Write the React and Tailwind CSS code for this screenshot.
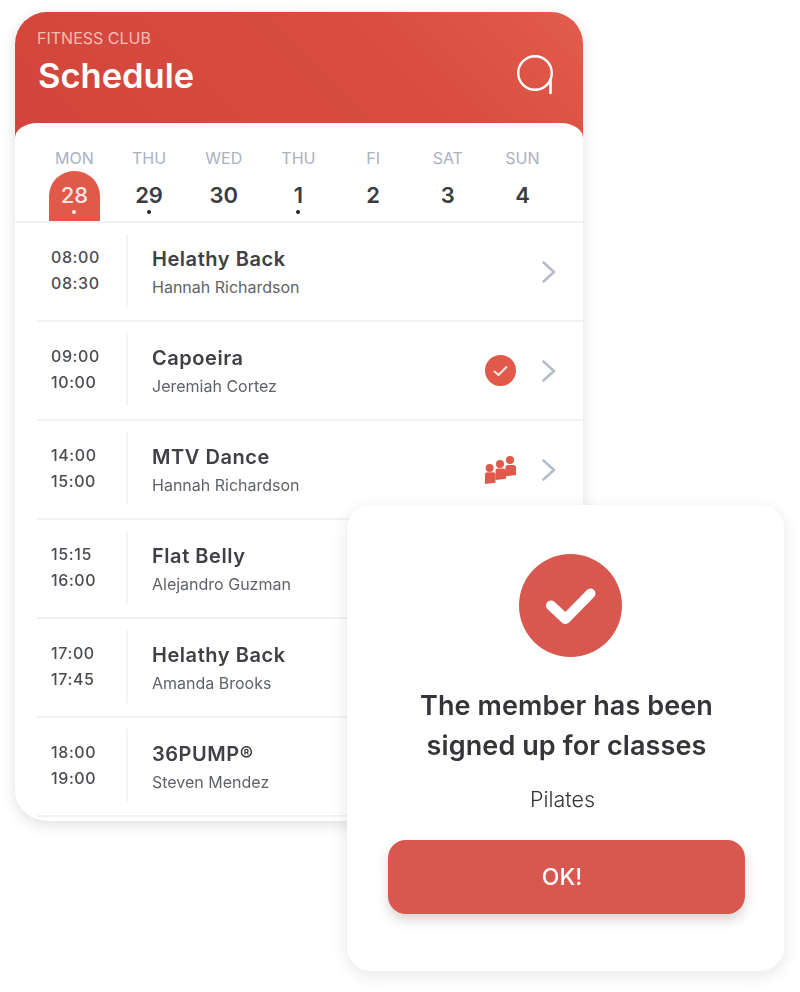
import React from "react";

const days = [
  { d: "MON", n: "28", active: true, dot: true },
  { d: "THU", n: "29", dot: true },
  { d: "WED", n: "30" },
  { d: "THU", n: "1", dot: true },
  { d: "FI", n: "2" },
  { d: "SAT", n: "3" },
  { d: "SUN", n: "4" },
];

const rows = [
  { a: "08:00", b: "08:30", t: "Helathy Back", p: "Hannah Richardson" },
  { a: "09:00", b: "10:00", t: "Capoeira", p: "Jeremiah Cortez", icon: "check" },
  { a: "14:00", b: "15:00", t: "MTV Dance", p: "Hannah Richardson", icon: "group" },
  { a: "15:15", b: "16:00", t: "Flat Belly", p: "Alejandro Guzman" },
  { a: "17:00", b: "17:45", t: "Helathy Back", p: "Amanda Brooks" },
  { a: "18:00", b: "19:00", t: "36PUMP®", p: "Steven Mendez" },
];

function Chevron() {
  return (
    <svg width="16" height="24" viewBox="0 0 16 24" fill="none" className="ml-[25px] mr-[26px] shrink-0">
      <path d="M2.5 2.5 L13 12 L2.5 21.5" stroke="#b4bdc9" strokeWidth="2.6" strokeLinecap="round" strokeLinejoin="round" />
    </svg>
  );
}

function Group() {
  return (
    <svg width="31" height="28" viewBox="0 0 31 28" fill="#e0594a" className="shrink-0">
      <circle cx="25" cy="4" r="4" />
      <path d="M20.5 11.5 q0-2.5 2.5-2.5 h5.5 q2.5 0 2.5 2.5 v7.5 l-10.5 1.2z" />
      <circle cx="15" cy="8" r="4" />
      <path d="M10.5 15 q0-2.5 2.5-2.5 h5.5 q2.5 0 2.5 2.5 v7.7 l-10.5 1.2z" />
      <circle cx="4.6" cy="12" r="4" />
      <path d="M0 19 q0-2.8 2.5-2.8 h5.5 q2.5 0 2.5 2.8 v7.7 l-10.5 1.3z" />
    </svg>
  );
}

function Check() {
  return (
    <div className="w-[31px] h-[31px] rounded-full bg-[#e0594a] flex items-center justify-center shrink-0">
      <svg width="15" height="12" viewBox="0 0 15 12" fill="none">
        <path d="M1.5 6.5 L5.5 10 L13.5 2" stroke="#fde8e4" strokeWidth="2" strokeLinecap="round" strokeLinejoin="round" />
      </svg>
    </div>
  );
}

function Row({ r }) {
  return (
    <div className="h-[99px] ml-[22px] border-b-2 border-[#f1f2f5] flex items-center">
      <div className="w-[91px] flex flex-col gap-[7px] pl-[14px] text-[16px] leading-[19px] font-medium text-[#4a4d52] tracking-[0.6px] h-[73px] justify-center border-r-2 border-[#f3f4f7] mb-[2px]">
        <div>{r.a}</div>
        <div>{r.b}</div>
      </div>
      <div className="flex-1 pl-[24px]">
        <div className="text-[20px] leading-[26px] font-semibold text-[#3e4045] tracking-[0.55px]">{r.t}</div>
        <div className="text-[16px] leading-[20px] mt-[5px] text-[#5f6368]">{r.p}</div>
      </div>
      {r.icon === "check" && <Check />}
      {r.icon === "group" && <Group />}
      <Chevron />
    </div>
  );
}

export default function App() {
  return (
    <div className="relative w-[800px] h-[992px] bg-white overflow-hidden font-['Inter',sans-serif]">
      <div className="ml-[15px] pt-[12px] w-[568px]">
        <div className="h-[809px] rounded-[32px] overflow-hidden bg-white shadow-[0_4px_14px_rgba(60,70,90,0.16)] blur-[0.7px]">
          <div className="h-[140px] bg-[linear-gradient(45deg,#d2443b,#d94e41_70%,#e35c4c)] px-[23px] pt-[17px] flex justify-between">
            <div>
              <div className="text-[16px] leading-[18px] text-[#f5bdb5] -ml-[1px]">FITNESS CLUB</div>
              <div className="text-[34.5px] leading-[40px] mt-[9px] font-semibold text-white">Schedule</div>
            </div>
            <svg width="40" height="40" viewBox="0 0 40 40" fill="none" className="mt-[26px] mr-[3px]">
              <circle cx="18" cy="18" r="16.8" stroke="white" strokeWidth="2.4" />
              <path d="M33.5 24 V38" stroke="white" strokeWidth="2.6" strokeLinecap="round" />
            </svg>
          </div>
          <div className="-mt-[29px] bg-white rounded-tl-[22px_15px] rounded-tr-[22px_15px] relative">
            <div className="flex h-[100px] pt-[25px] pl-[22px] pr-[23px] border-b-2 border-[#f1f2f5]">
              {days.map((x, i) => (
                <div key={i} className="w-[74.7px] flex flex-col items-center">
                  <div className="text-[16px] leading-[20px] text-[#a9b2bf]">{x.d}</div>
                  <div
                    className={
                      x.active
                        ? "mt-[3px] w-[51px] h-[50px] rounded-t-[25px] bg-[#e15a49] flex flex-col items-center text-[#fde7e3]"
                        : "mt-[3px] w-[51px] h-[50px] flex flex-col items-center text-[#3a3c40]"
                    }
                  >
                    <div className={x.active ? "text-[22px] leading-[26px] mt-[11px] font-medium" : "text-[22px] leading-[26px] mt-[11px] font-semibold"}>{x.n}</div>
                    {x.dot && <div className={x.active ? "w-[4px] h-[4px] rounded-full mt-[2px] bg-[#fde7e3]" : "w-[4px] h-[4px] rounded-full mt-[2px] bg-[#222]"} />}
                  </div>
                </div>
              ))}
            </div>
            {rows.map((r, i) => (
              <Row key={i} r={r} />
            ))}
          </div>
        </div>
      </div>

      <div className="absolute left-[347px] top-[505px] w-[437px] h-[466px] rounded-[24px] bg-white shadow-[0_4px_16px_rgba(60,70,90,0.13)] flex flex-col items-center pt-[49px] font-['Inter',sans-serif]">
        <div className="w-[103px] h-[103px] ml-[10px] rounded-full bg-[#d8574e] flex items-center justify-center">
          <svg width="54" height="42" viewBox="0 0 54 42" fill="none">
            <path d="M7 20.5 L21.5 34 L46.5 8.5" stroke="white" strokeWidth="10" strokeLinecap="round" strokeLinejoin="round" />
          </svg>
        </div>
        <div className="mt-[29px] text-center text-[27px] leading-[40px] font-semibold text-[#333538] tracking-[0.1px] ml-[2px] w-[420px]">
          <div>The member has been</div>
          <div>signed up for classes</div>
        </div>
        <div className="mt-[20px] text-[21.5px] leading-[26px] font-light text-[#333538] -ml-[6px]">Pilates</div>
        <div className="mt-[28px] w-[357px] h-[74px] ml-[2px] pr-[9px] rounded-[18px] bg-[#d8574e] shadow-[0_6px_12px_rgba(90,60,60,0.22)] flex items-center justify-center text-[23px] font-medium text-white">
          OK!
        </div>
      </div>
    </div>
  );
}
